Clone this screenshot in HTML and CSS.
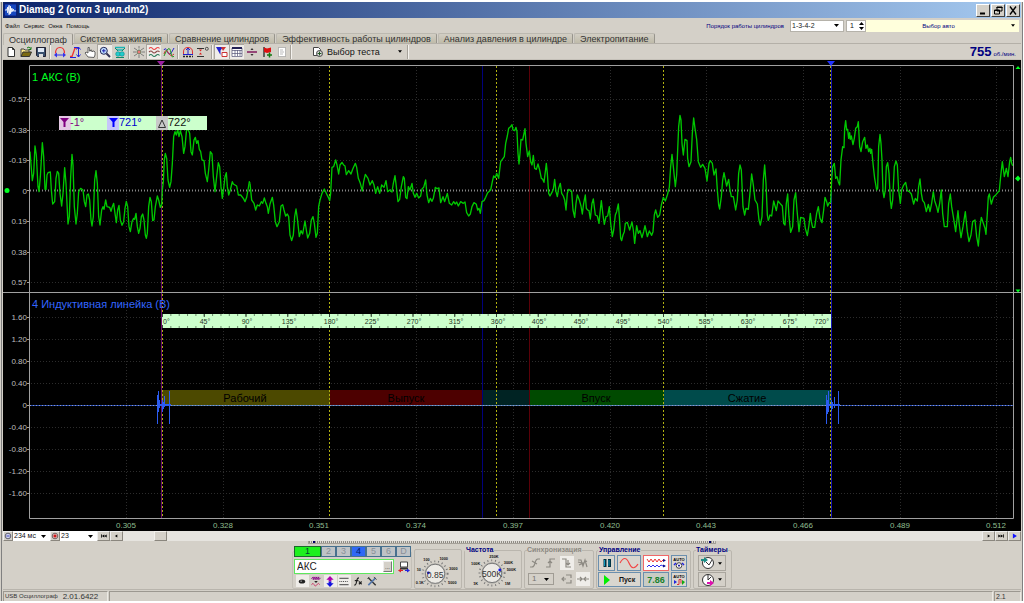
FILE: index.html
```html
<!DOCTYPE html>
<html lang="ru">
<head>
<meta charset="utf-8">
<title>Diamag 2 (откл 3 цил.dm2)</title>
<link rel="stylesheet" href="styles.css">
</head>
<body>
<div class="app">
  <header class="titlebar">
    <svg class="logo" viewBox="0 0 14 14"><rect width="14" height="14" fill="#0a1c78"/><rect x="1" y="1" width="12" height="12" fill="#1748c0"/><path d="M1 7h2l1-3v6l1.500-8v10L7 3v8l1.500-6v4L10 6v2h3" fill="none" stroke="#fff"/></svg>
    <h1 class="title">Diamag 2 (откл 3 цил.dm2)</h1>
    <div class="winbtns">
      <button class="winbtn" aria-label="Свернуть"><svg viewBox="0 0 12 10"><path d="M3 8h5" stroke="#000" stroke-width="2"/></svg></button>
      <button class="winbtn" aria-label="Восстановить"><svg viewBox="0 0 12 10"><path d="M5 1.500h5v4H5zM4.500 2h6M2.500 4.500h5v4h-5zM2 5h6" fill="none" stroke="#000"/></svg></button>
      <button class="winbtn" aria-label="Закрыть"><svg viewBox="0 0 12 10"><path d="M3 1l6 8M9 1L3 9" stroke="#000" stroke-width="1.300"/></svg></button>
    </div>
  </header>

  <div class="menubar">
    <nav class="menus"><button>Файл</button><button>Сервис</button><button>Окна</button><button>Помощь</button></nav>
    <div class="vehicle">
      <label for="order">Порядок работы цилиндров</label>
      <select id="order" class="order"><option>1-3-4-2</option></select>
      <span class="spin"><input id="cyl" value="1" aria-label="Цилиндр"><svg viewBox="0 0 7 10"><path d="M1 4l2.500-3L6 4zM1 6l2.500 3L6 6z"/></svg></span>
      <button class="car"><span>Выбор авто</span><svg viewBox="0 0 5 3"><path d="M0 0h5L2.500 3z"/></svg></button>
    </div>
  </div>

  <div class="tabs" role="tablist">
    <button class="tab active" role="tab">Осциллограф</button>
    <button class="tab" role="tab">Система зажигания</button>
    <button class="tab" role="tab">Сравнение цилиндров</button>
    <button class="tab" role="tab">Эффективность работы цилиндров</button>
    <button class="tab" role="tab">Анализ давления в цилиндре</button>
    <button class="tab" role="tab">Электропитание</button>
  </div>

  <div class="toolbar">
    <button class="tool" aria-label="Новый"><svg viewBox="0 0 12 12"><path d="M3 1.500h4.500l2 2v7H3z" fill="#fff" stroke="#333"/><path d="M7.500 1.500v2h2" fill="none" stroke="#333"/></svg></button>
    <button class="tool" aria-label="Открыть"><svg viewBox="0 0 12 12"><path d="M1 10.500V3h3l1 1h4v2" fill="#ffe98a" stroke="#444"/><path d="M1 10.500L3 6h8.500l-2 4.500z" fill="#7c6a10" stroke="#333"/><path d="M7 2q2-2 3.500.500M11 1v2.500H8.500" fill="none" stroke="#171"/></svg></button>
    <button class="tool" aria-label="Сохранить"><svg viewBox="0 0 12 12"><path d="M1.500 1.500h9v9h-8l-1-1z" fill="#39506e" stroke="#223"/><path d="M3 2h6v4H3z" fill="#dfe8f5"/><path d="M4 8h4v3H4z" fill="#ddd"/></svg></button>
    <span class="sep"></span>
    <button class="tool" aria-label="Развёртка"><svg viewBox="0 0 12 12"><path d="M1.500 7.500Q1.500 1.500 6 1.500t4.500 6" fill="none" stroke="#e33" stroke-width="1.200"/><path d="M0 9l3-2.500V8.500h6V6.500L12 9l-3 2.500V9.500H3v2z" fill="#33e"/></svg></button>
    <button class="tool" aria-label="Масштаб"><svg viewBox="0 0 12 12"><path d="M1 10.500h2L6 2h2" fill="none" stroke="#e33" stroke-width="1.300"/><path d="M9.500 1v10M7.500 3.500l2-2.500 2 2.500M7.500 8.500l2 2.500 2-2.500M5 1.500h4M1 11.500h6" fill="none" stroke="#22d"/></svg></button>
    <button class="tool" aria-label="Рука"><svg viewBox="0 0 12 12"><path d="M4 11L1 7l1-1 2 1V1.500h1.300V5h1.200V4h1.200v1.500h1.200V5H10l1 1v3l-1 2.500z" fill="#fff" stroke="#444" stroke-width=".8"/></svg></button>
    <button class="tool on" aria-label="Лупа"><svg viewBox="0 0 12 12"><circle cx="4.800" cy="4.800" r="3.500" fill="#bfe0ff" stroke="#225" /><path d="M3 4.800h3.600M4.800 3v3.600" stroke="#22a"/><path d="M7.500 7.500l3.500 3.500" stroke="#335" stroke-width="2"/></svg></button>
    <button class="tool" aria-label="Поиск"><svg viewBox="0 0 12 12"><path d="M1 1.500h10M3 4h6" stroke="#1cb5b5" stroke-width="1.400"/><path d="M1 2l3 3M11 2L8 5" stroke="#186"/><circle cx="4" cy="8" r="2.300" fill="#2cc" stroke="#188" stroke-width=".6"/><circle cx="8" cy="8" r="2.300" fill="#2cc" stroke="#188" stroke-width=".6"/><path d="M2 11.500h8" stroke="#186"/></svg></button>
    <span class="sep"></span>
    <button class="tool" aria-label="Центр"><svg viewBox="0 0 12 12"><path d="M0 6h3M9 6h3M6 0v2.500M6 9v3M1 2l3 2M11 2L8 4M1 10l3-2M11 10L8 8" stroke="#6a6a6a" stroke-width=".8"/><circle cx="6" cy="6" r="2" fill="#e77" stroke="#475" stroke-width=".8"/></svg></button>
    <button class="tool on" aria-label="Слои"><svg viewBox="0 0 12 12"><g fill="none" stroke-width="1.100"><path d="M1 2.500q2-2 3.500 0t3.500 0 3.500 0" stroke="#e44"/><path d="M1 6q2-2 3.500 0t3.500 0 3.500 0" stroke="#844"/><path d="M1 9.500q2-2 3.500 0t3.500 0 3.500 0" stroke="#2b7b5b"/></g></svg></button>
    <button class="tool" aria-label="Наложение"><svg viewBox="0 0 12 12"><g fill="none"><path d="M1 4q1.500-3 3 1t3 3 4-6" stroke="#22c"/><path d="M1 8q1.500-5 3-3t3 4 4-1" stroke="#c33"/><path d="M1 10q2-5 4-7t3 4 3 3" stroke="#292"/></g></svg></button>
    <span class="sep"></span>
    <button class="tool" aria-label="Авто"><svg viewBox="0 0 12 12"><path d="M1.500 8V6q0-4.500 4.500-4.500T10.500 6v2" fill="none" stroke="#d33"/><path d="M6 2v6M4 4l2-2 2 2M1 8.500h10" stroke="#22c" fill="none"/><path d="M1 10.500h10" stroke="#222" stroke-width="1.500" stroke-dasharray="2 1"/></svg></button>
    <button class="tool" aria-label="Ноль"><svg viewBox="0 0 12 12"><path d="M0 2.500h7M0 10.500h7" stroke="#333"/><path d="M2 8.500l1.500-2L5 8.500z" fill="#d22"/><path d="M2 3.500h3L3.500 5.500z" fill="#d22"/><circle cx="9.800" cy="2.800" r="1.500" fill="none" stroke="#333" stroke-width=".8"/></svg></button>
    <span class="sep"></span>
    <button class="tool on" aria-label="Фильтр"><svg viewBox="0 0 12 12"><path d="M0 1h7L4.500 4.500V9z" fill="#22c"/><path d="M5 1h5L7 5z" fill="#c33"/><path d="M6 6.500h5v4H6z" fill="#fff" stroke="#c33"/></svg></button>
    <button class="tool on" aria-label="Таблица"><svg viewBox="0 0 12 12"><path d="M1 2h10v8.500H1zM1 4.500h10M1 7.500h10M4 4v6M6.500 4v6M9 4v6" fill="#fff" stroke="#557" stroke-width=".7"/><path d="M1 2h10" stroke="#225" stroke-width="2"/></svg></button>
    <button class="tool" aria-label="Разделить"><svg viewBox="0 0 12 12"><path d="M1 6h10" stroke="#82185c" stroke-width="1.500"/><path d="M4.500 4h3L6 2zM4.500 8h3L6 10z" fill="#333"/></svg></button>
    <button class="tool" aria-label="Флаг"><svg viewBox="0 0 12 12"><path d="M3 1v10" stroke="#333" stroke-width="1.400"/><path d="M3 1.500l3 1 4-1v4.500l-4 1-3-1z" fill="#d11"/><path d="M6 9h5M8.500 6.500v5" stroke="#171" stroke-width="1.500"/></svg></button>
    <button class="tool" aria-label="Отчёт"><svg viewBox="0 0 12 12"><path d="M2.500 1.500h7v9h-7z" fill="#fff" stroke="#888" stroke-dasharray="1 1"/><path d="M4 4h3M4 6h4M4 8h3" stroke="#bbb"/></svg></button>
    <span class="sep"></span>
    <button class="testpick"><svg viewBox="0 0 12 12"><path d="M1.500 1.500h5l2 2v6h-7z" fill="#fff" stroke="#444"/><circle cx="7.500" cy="7.500" r="3" fill="#ddd" stroke="#444"/><path d="M7.500 5.500v4M5.500 7.500h4" stroke="#252"/></svg><span>Выбор теста</span><svg class="caret" viewBox="0 0 5 3"><path d="M0 0h5L2.500 3z"/></svg></button>
    <span class="sep"></span>
    <div class="rpm"><b>755</b><span>об./мин.</span></div>
  </div>

  <svg class="chart" viewBox="3 60 1018 471" role="img" aria-label="Осциллограмма">
    <rect x="3" y="60" width="1018" height="471" fill="#000"/>
    <path class="grid" d="M126.500 67V518M223.500 67V518M319.500 67V518M416.500 67V518M513.500 67V518M610.500 67V518M706.500 67V518M803.500 67V518M900.500 67V518M996.500 67V518M31 99.500H1013M31 130.500H1013M31 160.500H1013M31 221.500H1013M31 252.500H1013M31 282.500H1013M31 317.500H1013M31 339.500H1013M31 361.500H1013M31 383.500H1013M31 427.500H1013M31 449.500H1013M31 471.500H1013M31 493.500H1013"/>
    <path class="zero" d="M30 190.500H1013"/>

    <g class="phase">
      <rect x="162" y="390" width="168" height="16" fill="#4c4900"/>
      <rect x="330" y="390" width="152" height="16" fill="#4d0000"/>
      <rect x="482" y="390" width="47" height="16" fill="#002323"/>
      <rect x="529" y="390" width="135" height="16" fill="#004a00"/>
      <rect x="664" y="390" width="167" height="16" fill="#004b4b"/>
      <text x="245" y="402">Рабочий</text>
      <text x="406" y="402">Выпуск</text>
      <text x="596" y="402">Впуск</text>
      <text x="747" y="402">Сжатие</text>
    </g>

    <path d="M482.500 66V518" stroke="#00007c"/>
    <path d="M529.500 66V518" stroke="#5a0008"/>
    <path d="M161.500 66V518" stroke="#6c106c"/>
    <path d="M831.500 66V518" stroke="#1414b8"/>
    <path class="tdc" d="M162.500 66V518M329.500 66V518M496.500 66V518M663.500 66V518M830.500 66V518"/>

    <g class="ruler">
      <rect x="162" y="314" width="669" height="14"/>
      <path d="M162 315H830M162 327H830" stroke="#6a8a6a" stroke-width="2" stroke-dasharray="1 7.350"/>
      <path d="M162 315.500H830M162 326.500H830" stroke="#334433" stroke-width="3" stroke-dasharray="1 40.750"/>
      <text x="163" y="324" class="start">0°</text><text x="205" y="324">45°</text><text x="247" y="324">90°</text><text x="289" y="324">135°</text><text x="331" y="324">180°</text><text x="372" y="324">225°</text><text x="414" y="324">270°</text><text x="456" y="324">315°</text><text x="498" y="324">360°</text><text x="539" y="324">405°</text><text x="581" y="324">450°</text><text x="623" y="324">495°</text><text x="665" y="324">540°</text><text x="706" y="324">585°</text><text x="748" y="324">630°</text><text x="790" y="324">675°</text><text x="829" y="324" class="end">720°</text>
    </g>

    <g class="wave" transform="scale(.33333)">
      <polyline transform="translate(0 330)" points="90,125 92,150 97,212 101,190 105,108 109,135 114,230 117,245 121,200 127,98 131,140 135,238 138,238 141,195 144,188 151,186 154,240 158,282 164,275 168,205 172,184 176,190 180,250 185,288 189,250 194,173 198,220 204,342 208,320 212,200 216,133 219,165 223,290 228,342 232,310 236,245 242,235 249,240 253,275 257,290 261,255 265,252 269,270 273,330 276,348 280,320 284,210 288,182 292,220 296,320 300,345 305,300 309,290 312,298 317,270 321,290 329,292 333,304 337,290 341,280 345,310 349,338 353,300 357,286 361,330 366,346 371,335 375,295 379,274 383,290 387,350 391,365 396,335 401,325 404,328 408,310 412,350 416,370 420,355 424,320 428,312 432,330 436,375 439,385 442,370 446,290 450,262 454,275 458,332 462,330 466,290 472,258 476,270 481,292 485,285 487,240 490,215 493,150 496,130 500,145 504,210 509,232 513,215 517,160 521,80 525,65 529,75 533,58 537,80 541,62 546,80 551,130 555,110 560,55 565,60 569,70 573,125 577,135 582,90 586,82 590,100 594,92 598,118 602,125 606,150 612,152 616,190 622,215 626,180 631,125 636,132 640,200 645,245 650,200 655,158 659,170 663,230 667,265 671,235 675,200 679,188 682,230 686,255 691,240 697,215 700,222 710,228 715,255 722,255 730,265 735,275 740,262 744,240 748,215 750,220"/>
      <polyline transform="translate(750 330)" points="0,220 5,270 12,280 17,300 22,285 28,288 34,275 38,280 43,264 48,280 52,290 55,310 60,282 67,262 71,285 76,335 81,350 88,335 93,288 98,284 102,300 107,318 112,312 116,320 120,375 125,392 130,375 134,320 138,297 142,325 148,380 153,362 158,372 165,333 169,360 173,384 179,370 184,330 189,320 193,340 198,382 202,370 206,290 210,270 216,250 223,237 230,252 235,262 239,272 242,250 246,172 251,170 257,150 261,165 266,192 270,165 276,157 281,165 285,168 289,194 296,182 303,192 308,178 316,160 320,172 325,205 331,220 337,243 341,215 346,193 354,205 360,225 367,212 372,225 377,250 383,230 389,250 395,225 402,232 408,212 413,245 419,240 426,246 430,220 435,197 439,230 444,275 449,268 454,230 460,200 463,205 467,262 471,266 475,230 480,240 486,220 490,250 495,262 500,250 506,264 512,258 516,237 521,232 527,210 531,255 536,278 541,265 546,274 550,265 556,232 561,236 567,234 572,278 579,260 584,275 592,250 598,280 605,285 611,275 616,282 620,276 625,288 632,275 640,280 645,276 650,308 656,318 661,312 666,290 672,278 679,283 683,300 687,295 691,310 696,275 702,272 707,262 713,248 722,240 727,215 731,198 736,203 740,190 746,205 752,155 757,148 763,140 767,100 772,78 776,55 780,52"/>
      <polyline transform="translate(1530 300)" points="0,82 6,74 9,90 14,92 18,82 21,95 24,160 27,192 30,160 33,118 38,120 45,86 48,130 53,170 58,153 62,185 66,195 70,166 74,205 79,208 84,192 89,210 94,235 98,238 102,247 106,215 109,190 112,220 116,280 120,288 127,275 130,268 134,238 138,275 142,290 146,265 151,250 155,280 160,288 164,300 168,330 172,280 176,268 185,274 189,330 194,352 198,310 202,285 208,300 213,318 217,342 221,310 226,285 229,325 233,330 237,332 241,357 246,310 250,297 256,345 262,348 267,370 271,330 274,302 279,345 283,373 288,350 293,348 298,320 302,370 307,410 311,390 316,345 320,335 325,312 328,350 332,415 335,422 339,405 343,395 346,370 352,367 359,390 366,366 370,390 374,430 380,377 385,400 390,392 396,413 401,395 405,377 409,395 412,410 418,393 425,406 429,395 433,345 437,330 443,352 449,345 454,315 460,292 466,303 472,285 478,262 482,200 486,163 490,200 496,260 500,225 503,150 506,80 510,46 513,60 516,130 520,165 525,118 531,122 533,175 537,200 543,185 547,100 551,54 555,85 560,118 565,185 572,202 578,193 585,205 591,243 597,190 601,182 607,190 612,225 618,207 622,270 626,315 629,327 634,290 638,240 642,218 650,258 656,238 660,270 664,290 670,290 677,330 682,300 686,220 690,195 694,210 699,320 704,345 708,325 715,328 719,290 725,222 730,255 735,300 742,312 747,360 751,375 756,350 760,240 764,195 768,250 772,345 775,362"/>
      <polyline transform="translate(2292 300)" points="13,362 18,345 23,348 29,303 37,332 42,303 48,310 55,318 59,370 63,375 67,310 71,282 75,350 80,397 86,380 90,300 95,278 99,330 105,395 110,352 120,355 124,385 130,407 135,375 139,340 142,365 146,382 152,382 158,340 163,320 168,355 174,368 179,330 183,292 188,305 191,318 196,308 200,307 203,240 206,200 211,190 215,235 219,230 223,245 227,255 231,180 236,140 240,143 242,85 245,62 248,90 251,88 254,115 257,98 259,118 262,108 267,134 271,115 275,85 280,80 283,65 287,140 291,155 296,125 302,112 306,145 310,135 314,155 318,145 320,160 323,148 328,200 332,235 338,270 341,265 344,140 348,103 351,130 354,180 357,275 360,293 364,270 367,200 371,188 375,220 379,300 382,325 386,300 391,200 396,183 400,195 404,270 409,310 413,270 418,257 425,247 430,272 436,275 442,282 449,312 454,295 460,303 464,260 468,237 472,280 476,302 481,308 487,335 493,313 498,335 503,310 508,275 512,302 518,320 522,337 527,310 532,270 536,340 541,380 550,380 554,310 559,282 563,320 568,350 575,395 582,332 586,375 591,413 597,380 604,335 610,395 615,425 621,405 626,365 633,360 638,410 643,438 648,380 652,352 658,370 663,385 666,403 670,340 673,290 676,282 682,312 688,292 696,284 706,272 710,230 715,185 721,230 727,205 732,230 737,185 740,172 743,190 746,197"/>
    </g>

    <g class="induct">
      <path d="M30 405.500H162M831 405.500H1013" stroke="#2246b0"/>
      <path d="M162 405.500H831" stroke="#4a7ab0"/>
      <path d="M30 405.500H1013" stroke="#8f9cc0" stroke-dasharray="1 2"/>
      <path d="M157.500 395V424M158.500 391V412M159.500 400V408M162.500 400V412M163.500 402V409M164.500 396V407M169.500 391V424M826.500 395V424M828.500 391V412M827.500 400V414M831.500 400V411M832.500 402V409M834.500 397V408M838.500 391V424"/>
      <path d="M158 405H171M826 405H840" stroke-width="2"/>
    </g>

    <path class="frame" d="M29.500 518.500V65.500H1013.500V518.500zM3 292.500H1021"/>
    <path class="frame" d="M27 99.500h2M27 130.500h2M27 160.500h2M27 190.500h2M27 221.500h2M27 252.500h2M27 282.500h2M27 317.500h2M27 339.500h2M27 361.500h2M27 383.500h2M27 405.500h2M27 427.500h2M27 449.500h2M27 471.500h2M27 493.500h2"/>
    <g class="ylab">
      <text x="27" y="102">-0.57</text><text x="27" y="133">-0.38</text><text x="27" y="163">-0.19</text><text x="27" y="194">0</text><text x="27" y="224">0.19</text><text x="27" y="255">0.38</text><text x="27" y="285">0.57</text>
      <text x="27" y="320">1.60</text><text x="27" y="342">1.20</text><text x="27" y="364">0.80</text><text x="27" y="386">0.40</text><text x="27" y="408">0</text><text x="27" y="430">-0.40</text><text x="27" y="452">-0.80</text><text x="27" y="474">-1.20</text><text x="27" y="496">-1.60</text>
    </g>
    <g class="xlab">
      <text x="126" y="528">0.305</text><text x="223" y="528">0.328</text><text x="319" y="528">0.351</text><text x="416" y="528">0.374</text><text x="513" y="528">0.397</text><text x="610" y="528">0.420</text><text x="706" y="528">0.443</text><text x="803" y="528">0.466</text><text x="900" y="528">0.489</text><text x="996" y="528">0.512</text>
    </g>
    <text class="ch ch1" x="32" y="81">1 АКС (В)</text>
    <text class="ch ch4" x="32" y="308">4 Индуктивная линейка (В)</text>

    <path d="M157 61h8l-4 5z" fill="#9c1fa0"/>
    <path d="M827 61h8l-4 5z" fill="#2233ff"/>
    <circle cx="7" cy="190.500" r="2.500" fill="#0f2"/>
    <path d="M1018 66l2.500 3h-5zM1018 292.500l2.500-3h-5zM1015 178.500l3-3 2.500 3-2.500 3z" fill="#0f2"/>

    <g class="cursorbox">
      <rect x="59" y="116" width="148" height="14" fill="#cfc"/>
      <rect x="59" y="116" width="12" height="14" fill="#e4c8e4"/>
      <rect x="107" y="116" width="12" height="14" fill="#c6c6fa"/>
      <rect x="156" y="116" width="12" height="14" fill="#c8c8c8"/>
      <path d="M60 118h9l-3.500 4v5h-2v-5z" fill="#800080"/>
      <path d="M109 118h9l-3.500 4v5h-2v-5z" fill="#00f"/>
      <path d="M162 120l3.500 7.500h-7z" fill="none" stroke="#333"/>
      <text x="70" y="126" fill="#800080">-1°</text>
      <text x="119" y="126" fill="#00c">721°</text>
      <text x="168" y="126" fill="#111">722°</text>
    </g>
  </svg>

  <div class="scrollrow">
    <button class="mini" aria-label="Уменьшить"><svg viewBox="0 0 10 10"><circle cx="5" cy="5" r="3.500" fill="#cfd4ee" stroke="#445"/><path d="M3 5h4" stroke="#22a"/></svg></button>
    <select class="mselect" aria-label="Развёртка"><option>234 мс</option></select>
    <button class="mini" aria-label="Увеличить"><svg viewBox="0 0 10 10"><circle cx="5" cy="5" r="3.500" fill="#e8d0d0" stroke="#544"/><path d="M3 5h4M5 3v4" stroke="#c11" stroke-width="2"/></svg></button>
    <select class="mselect" aria-label="Кадр"><option>23</option></select>
    <button class="mini wide" aria-label="В начало"><svg viewBox="0 0 10 10"><path d="M2.500 3v4" stroke="#000"/><path d="M6 3v4L3 5zM9 3v4L6 5z"/></svg></button>
    <button class="mini wide" aria-label="Назад"><svg viewBox="0 0 10 10"><path d="M6 3v4L3 5z"/></svg></button>
    <input class="scroll" type="range" min="0" max="1000" value="37" aria-label="Позиция">
    <button class="mini wide" aria-label="Вперёд"><svg viewBox="0 0 10 10"><path d="M4 3v4l3-2z"/></svg></button>
    <button class="mini wide" aria-label="В конец"><svg viewBox="0 0 10 10"><path d="M1 3v4l3-2zM4 3v4l3-2z"/><path d="M7.500 3v4" stroke="#000"/></svg></button>
    <button class="mini wide" aria-label="Следить"><svg viewBox="0 0 10 10"><path d="M3 2v6l5-3z" fill="#11f"/></svg></button>
  </div>

  <div class="panel">
    <div class="splitter"><i></i><i></i></div>
    <div class="groups">
      <fieldset class="group channel">
        <legend class="chans"><button class="c1">1</button><button>2</button><button>3</button><button class="c4">4</button><button>5</button><button>6</button><button>D</button></legend>
        <div class="sensor">
          <div class="field"><input value="АКС" aria-label="Датчик"><button aria-label="Выбрать">...</button></div>
          <svg class="ico" viewBox="0 0 12 12"><path d="M2.500 1h7v5h-7z" fill="#fff" stroke="#444"/><path d="M2 7.500h8" stroke="#333" stroke-width="2"/><path d="M0 9.500l3-2v4z" fill="#d22"/><path d="M12 9.500l-3-2v4z" fill="#22d"/><path d="M3 9.500h2" stroke="#d22"/><path d="M7 9.500h2" stroke="#22d"/></svg>
        </div>
        <div class="chtools">
          <button class="on" aria-label="Показать"><svg viewBox="0 0 12 12"><ellipse cx="6" cy="6" rx="3.500" ry="2.300" fill="#222"/><circle cx="5" cy="5.500" r=".7" fill="#fff"/></svg></button>
          <button aria-label="Сглаживание"><svg viewBox="0 0 12 12"><path d="M1 3l2-2v3l2-3v3l2-3v3l2-3v3l2-2" fill="none" stroke="#808"/><path d="M1 9.500q2-3 3 0t3 0 3 0" fill="none" stroke="#c36"/><path d="M4 5.500h4l-2 2z" fill="#222"/></svg></button>
          <button class="on" aria-label="Инверсия"><svg viewBox="0 0 12 12"><path d="M6 0l4 4H7.500v2h-3V4H2z" fill="#a0a"/><path d="M6 12l4-4H7.500V6h-3v2H2z" fill="#11d"/></svg></button>
          <button class="on" aria-label="Линии"><svg viewBox="0 0 12 12"><path d="M1 2.500h10M1 9.500h10" stroke="#333"/><path d="M1 6h10" stroke="#333" stroke-dasharray="1 1"/></svg></button>
          <button aria-label="Функция"><svg viewBox="0 0 12 12"><path d="M2 10q2 0 2.500-4T7 2M2.500 5h4M7 6l3 3M10 6L7 9" fill="none" stroke="#222" stroke-width="1.200"/></svg></button>
          <button aria-label="Настройка"><svg viewBox="0 0 12 12"><path d="M2 2l8 8" stroke="#333" stroke-width="1.500"/><path d="M10 2L2 10" stroke="#57a" stroke-width="1.800"/><path d="M1 3l2-2M8 1l3 3" stroke="#444"/></svg></button>
        </div>
      </fieldset>

      <fieldset class="group knob amp" aria-label="Диапазон">
        <svg viewBox="0 0 48 38"><g fill="none" stroke="#777"><circle cx="21" cy="24" r="13" stroke-width="2" stroke-dasharray="1 3"/></g><circle cx="21" cy="24" r="11" fill="#aaa9a4"/><circle cx="21" cy="24" r="10" fill="#eceae5" stroke="#777"/><circle cx="14" cy="23" r="1.500" fill="#11e"/><text class="kv" x="21" y="28">0.85</text>
        <g class="kl"><text x="5" y="35">0.1K</text><text x="4" y="21">10</text><text x="12" y="11">100</text><text x="30" y="10">1000</text><text x="40" y="20">3000</text><text x="39" y="35">5000</text></g></svg>
      </fieldset>

      <fieldset class="group knob freq"><legend>Частота</legend>
        <svg viewBox="0 0 58 34"><g fill="none" stroke="#777"><circle cx="28" cy="19" r="13" stroke-width="2" stroke-dasharray="1 3"/></g><circle cx="28" cy="19" r="11" fill="#aaa9a4"/><circle cx="28" cy="19" r="10" fill="#eceae5" stroke="#777"/><circle cx="36" cy="16" r="1.500" fill="#11e"/><text class="kv" x="28" y="23">500K</text>
        <g class="kl"><text x="11" y="31">1K</text><text x="11" y="11">100K</text><text x="30" y="4">250K</text><text x="45" y="10">300K</text><text x="48" y="17">500K</text><text x="44" y="31">1M</text></g></svg>
      </fieldset>

      <fieldset class="group sync"><legend>Синхронизация</legend>
        <div class="line">
          <button aria-label="Фронт"><svg viewBox="0 0 12 12"><path d="M1 10h2q2 0 3-4t3-4h2M3 4l5 3" /></svg></button>
          <button aria-label="Подъём"><svg viewBox="0 0 12 12"><path d="M1 10h4V2h5M3 6l2-2 2 2" /></svg></button>
          <button class="on" aria-label="Спад"><svg viewBox="0 0 12 12"><path d="M1 2h4v8h5M7 3v5M5 6l2 2 2-2" /></svg></button>
          <button aria-label="Авто"><svg viewBox="0 0 12 12"><path d="M1 3h3l2 6 2-6 2 7M2 8l8-4M1 5l4 1" /></svg></button>
        </div>
        <div class="line"><select aria-label="Канал синхронизации" disabled><option>1</option></select>
          <button aria-label="Уровень"><svg viewBox="0 0 12 12"><path d="M1 6h4M5 2h5v3M5 10h5V7M3 4L1 6l2 2" /></svg></button>
          <button class="on" aria-label="Центр"><svg viewBox="0 0 12 12"><path d="M0 6h12M3 4l2 2-2 2M9 4L7 6l2 2" /></svg></button>
        </div>
      </fieldset>

      <fieldset class="group ctrl"><legend>Управление</legend>
        <div class="ctrlgrid">
          <button aria-label="Пауза"><svg viewBox="0 0 12 12"><path d="M4 2v8M8.500 2v8" stroke="#034" stroke-width="3"/><path d="M3.500 3v6M8 3v6" stroke="#19b"/></svg></button>
          <button aria-label="Сигнал"><svg viewBox="0 0 20 12"><path d="M1 6q5-9 9 0t9 1" fill="none" stroke="#f24444" stroke-width="1.200"/></svg></button>
          <button class="hot" aria-label="Два канала"><svg viewBox="0 0 20 12"><path d="M1 2l2 3 2-3 2 3 2-3 2 3 2-3 2 3 2-2h2" fill="none" stroke="#e33"/><path d="M1 10l2-2 2 2 2-2 2 2 2-2 2 2 2-2 2 1h2" fill="none" stroke="#33e"/><path d="M17 2l3 1.500L17 5zM17 7.500L20 9l-3 1.500z" fill="#118"/></svg></button>
          <button aria-label="Автомасштаб"><svg viewBox="0 0 12 12"><text x="6" y="4">AUTO</text><circle cx="6" cy="8.500" r="2.800" fill="#fff" stroke="#444"/><path d="M1 8l2-2M11 8L9 6" stroke="#22d" stroke-width="1.500"/><path d="M5 7.500l1 2 1-2" stroke="#22a" fill="none"/></svg></button>
          <button class="start"><svg viewBox="0 0 12 12"><path d="M3 1l6 5-6 5z" fill="#0e0"/></svg>Пуск</button>
          <output class="lcd">7.86</output>
          <button aria-label="Автозапуск"><svg viewBox="0 0 12 12"><text x="6" y="4">AUTO</text><path d="M4 10.500h2v-5h2v4" fill="none" stroke="#d33"/><path d="M1 6l3 2-3 2z" fill="#22d"/><path d="M9 6l3 2-3 3z" fill="#1a1"/></svg></button>
        </div>
      </fieldset>

      <fieldset class="group timers"><legend>Таймеры</legend>
        <button aria-label="Таймер запуска"><svg viewBox="0 0 14 14"><circle cx="7" cy="7" r="5.500" fill="#fff" stroke="#333"/><path d="M5 6l3 3 3-5" fill="none" stroke="#333"/><path d="M0 3h3V1l4 3-4 3V5H0z" fill="#1a8c84"/></svg><svg class="caret" viewBox="0 0 5 3"><path d="M0 0h5L2.500 3z"/></svg></button>
        <button aria-label="Таймер остановки"><svg viewBox="0 0 14 14"><circle cx="7" cy="7" r="5.500" fill="#fff" stroke="#333"/><path d="M7 2v5l3-3" fill="none" stroke="#333"/><path d="M6 9h3V7l4 3-4 3v-2H6z" fill="#e010b0"/></svg><svg class="caret" viewBox="0 0 5 3"><path d="M0 0h5L2.500 3z"/></svg></button>
      </fieldset>
    </div>
  </div>

  <footer class="status"><div class="dev"><span>USB Осциллограф</span><b>2.01.6422</b></div><div class="msg"></div><div class="ver">2.1</div></footer>
</div>
</body>
</html>
```
FILE: styles.css
```css
* { box-sizing: border-box; }
body { margin: 0; padding: 2px 1px 2px 0; background: #fff; font: 6px/8px "Liberation Sans", Arial, sans-serif; color: #111; }
button, input, select { font: inherit; color: inherit; margin: 0; padding: 0; border: 0; background: none; border-radius: 0; min-width: 0; }
h1 { margin: 0; }
svg { display: block; }

.app { display: flex; flex-direction: column; padding: 0 2px 0 3px; background: #d4d0c8; box-shadow: inset 1px 0 #d4d0c8, inset 2px 0 #808080, inset -1px 0 #808080; }

.titlebar { display: flex; align-items: center; gap: 2px; height: 16px; padding: 0 1px; background: linear-gradient(90deg, #0b246a, #a6caf0); color: #fff; }
.logo { width: 13px; height: 14px; }
.title { flex: 1; font-size: 10px; line-height: 14px; font-weight: bold; }
.winbtns { display: flex; gap: 1px; }
.winbtn { width: 14px; height: 13px; background: #d4d0c8; border: 1px solid; border-color: #fff #404040 #404040 #fff; }
.winbtn svg { width: 12px; height: 11px; }

.menubar { display: flex; justify-content: space-between; align-items: center; height: 15px; padding: 0 2px; }
.menus { display: flex; gap: 4px; }
.vehicle { display: flex; align-items: center; height: 12px; color: #000080; }
.vehicle label { margin-right: 6px; }
.vehicle > select, .spin, .car { height: 12px; }
select { appearance: none; background: #fff url("data:image/svg+xml,%3Csvg xmlns='http://www.w3.org/2000/svg' viewBox='0 0 5 3'%3E%3Cpath d='M0 0h5L2.500 3z'/%3E%3C/svg%3E") no-repeat right 4px center / 5px 3px; }
.order { width: 54px; border: 1px solid #b5b2aa; color: #222; padding-left: 1px; font-size: 7px; }
.spin { display: flex; width: 20px; margin-left: 2px; background: #fff; border: 1px solid #b5b2aa; color: #111; font-size: 7px; }
.spin input { width: 11px; padding-left: 3px; }
.spin svg { width: 7px; height: 10px; }
.car { display: flex; align-items: center; width: 153px; padding-right: 4px; background: #ffffdc; }
.car span { flex: 1; }
.car svg, .caret { width: 4px; height: 3px; }

.tabs { display: flex; gap: 1px; height: 11px; border-bottom: 1px solid #b4b0a8; }
.tab { padding: 0 5px; font-size: 9px; line-height: 10px; border: 1px solid; border-color: #bcb9b0 #97948c transparent #bcb9b0; border-bottom: 0; border-radius: 2px 2px 0 0; background: linear-gradient(#d2cec4, #bfbba9); color: #333; }
.tab.active { height: 12px; background: #d4d0c8; }

.toolbar { display: flex; align-items: center; height: 16px; border-bottom: 1px solid #c4c0b8; }
.tool { display: grid; place-items: center; width: 15px; height: 15px; }
.tool svg { width: 12px; height: 12px; }
.on { background: #efede9; }
.tool.on { box-shadow: inset 1px 1px #aaa69e; }
.sep { width: 4px; height: 14px; background: linear-gradient(90deg, transparent 1px, #a6a29a 1px 2px, #f4f2ee 2px 3px, transparent 3px); }
.testpick { display: flex; align-items: center; gap: 3px; width: 113px; padding: 0 4px 0 19px; font-size: 9px; line-height: 12px; }
.testpick svg { width: 12px; height: 12px; }
.testpick span { flex: 1; text-align: left; }
.testpick .caret { width: 4px; height: 3px; }
.rpm { margin-left: auto; padding-right: 5px; color: #000080; display: flex; align-items: baseline; gap: 2px; }
.rpm b { font-size: 13px; line-height: 15px; }

.chart { width: 100%; height: auto; font-family: "Liberation Sans", Arial, sans-serif; }
.grid, .zero, .frame, .tdc { fill: none; stroke-width: 1; }
.grid { stroke: #2c2c2c; stroke-dasharray: 1 2; }
.zero { stroke: #858585; stroke-dasharray: 1 2; stroke-width: 2; }
.frame { stroke: #a0a0a0; }
.tdc { stroke: #b0b010; stroke-dasharray: 2 2; }
.phase text { font-size: 11px; text-anchor: middle; fill: #000; }
.ruler rect { fill: #cfc; }
.ruler text { font-size: 7px; fill: #243524; text-anchor: middle; }
.ruler .start { text-anchor: start; }
.ruler .end { text-anchor: end; }
.wave { fill: none; stroke: #00c800; stroke-width: 4; stroke-linejoin: round; }
.induct { fill: none; stroke: #2c5cf0; }
.ylab, .xlab { font-size: 8px; fill: #bcbcbc; text-anchor: end; }
.xlab { fill: #8fbc8f; text-anchor: middle; }
.ch { font-size: 11px; }
.ch1 { fill: #0f2; }
.ch4 { fill: #36f; }
.cursorbox { font-size: 11px; }

.scrollrow { display: flex; height: 10px; background: #e6e4df; }
.mini { width: 10px; background: #d4d0c8; border: 1px solid; border-color: #eee #8a867e #8a867e #eee; }
.mini.wide { width: 13px; }
.mini svg { width: 100%; height: 8px; }
.mselect { width: 37px; font-size: 7px; padding-left: 1px; }
.scroll { flex: 1; appearance: none; }
.scroll::-webkit-slider-thumb { appearance: none; width: 13px; height: 10px; background: #d4d0c8; border: 1px solid; border-color: #f2f0ec #8a867e #8a867e #f2f0ec; }

.panel { display: flex; flex-direction: column; align-items: center; height: 49px; border-bottom: 1px solid #b8b4ac; }
.splitter { display: flex; justify-content: space-between; width: 40%; height: 3px; padding: 0 4px; border: solid #a4a098; border-width: 0 1px 1px; background: repeating-linear-gradient(90deg, #8f8b84 0 1px, #dedbd5 1px 2px); }
.splitter i { width: 2px; height: 2px; background: #006; }
.groups { display: flex; align-items: flex-end; gap: 2px; padding-top: 2px; }
.group { height: 43px; margin: 0; padding: 1px 2px 0; border: 1px solid #bab6ae; border-radius: 2px; min-width: 0; }
.group legend { padding: 0 1px; font-size: 7px; line-height: 8px; font-weight: bold; color: #000080; }
.group svg { width: 12px; height: 12px; }

.channel { width: 120px; padding: 2px 1px 0; border-color: #c4c0b8; }
.group .chans { display: flex; padding: 0; color: #8a9098; font-weight: normal; font-size: 9px; }
.chans button { width: 15px; height: 11px; line-height: 9px; border: 1px solid #47708e; background: #bfc3c6; }
.chans .c1 { width: 27px; background: #1ef01e; border-color: #186a28; color: #043; }
.chans .c4 { background: #2f68f5; color: #001a66; }
.sensor { display: flex; align-items: center; gap: 4px; }
.field { display: flex; width: 100px; height: 15px; padding: 1px; background: #fff; border: 1px solid #5de85d; }
.field input { flex: 1; padding-left: 1px; font-size: 10px; color: #222; }
.field button { width: 9px; background: #d4d0c8; border: 1px solid; border-color: #eee #777 #777 #eee; line-height: 6px; }
.chtools { display: flex; gap: 1px; padding: 1px 2px 0; }
.chtools button { width: 13px; height: 12px; }
.chtools svg { width: 12px; height: 11px; }

.knob { padding: 0; overflow: hidden; }
.amp { width: 48px; height: 40px; }
.amp svg { width: 46px; height: 38px; }
.freq { width: 58px; }
.freq svg { width: 56px; height: 34px; }
.kv { font-size: 9px; text-anchor: middle; fill: #333; }
.kl { font-size: 4px; font-weight: bold; text-anchor: middle; fill: #111; }

.sync { width: 70px; }
.group.sync legend { color: #8c8982; }
.sync legend { padding: 0; }
.sync svg { fill: none; stroke: #8c8982; stroke-width: 1.2; }
.line { display: flex; justify-content: space-between; align-items: center; height: 16px; padding: 0 1px; }
.line button { display: grid; place-items: center; width: 14px; height: 14px; }
.line select { width: 26px; height: 12px; border: 1px solid #a09c94; background-color: #d4d0c8; color: #77746e; opacity: 1; font-size: 8px; padding-left: 3px; margin-right: 4px; }

.ctrl { width: 95px; }
.group.ctrl { padding: 1px 1px 0; }
.ctrlgrid { display: grid; grid-template-columns: 17px 24px 26px 16px; grid-template-rows: 16px 15px; gap: 1px 2px; }
.ctrlgrid > * { display: flex; align-items: center; justify-content: center; border: 1px solid #6b8fae; background: #d9d6cf; overflow: hidden; }
.ctrlgrid svg { fill: #000; font: bold 4px "Liberation Sans", Arial, sans-serif; text-anchor: middle; }
.ctrlgrid button:nth-child(2) svg, .ctrlgrid .hot svg { width: 20px; }
.ctrlgrid .hot { border-color: #f06868; background: #fff; }
.ctrlgrid .start { grid-column: span 2; justify-content: flex-start; gap: 6px; padding-left: 2px; font-weight: bold; font-size: 7px; }
.lcd { font: bold 9px "Liberation Sans", Arial, sans-serif; color: #17802a; background: #c8ccc4; }

.timers { width: 39px; }
.timers button { display: flex; align-items: center; gap: 3px; width: 28px; height: 16px; padding: 0 2px; margin: 0 1px 1px 2px; border: 1px solid; border-color: #f2f0ec #827e76 #827e76 #f2f0ec; outline: 1px solid #aaa69e; outline-offset: -1px; }
.timers svg { width: 14px; height: 14px; }
.timers .caret { width: 4px; height: 3px; }
.timers button + button { height: 15px; }
.group.timers legend { padding: 0; }

.status { display: flex; gap: 1px; height: 11px; padding-top: 1px; color: #333; }
.status > div { border: 1px solid; border-color: #9c9890 #eceae4 transparent #9c9890; border-bottom: 0; }
.dev { display: flex; gap: 5px; width: 105px; padding-left: 1px; }
.dev b { font-size: 8px; font-weight: normal; line-height: 9px; }
.msg { flex: 1; }
.ver { width: 27px; font-size: 7px; line-height: 9px; padding-left: 1px; }
```
